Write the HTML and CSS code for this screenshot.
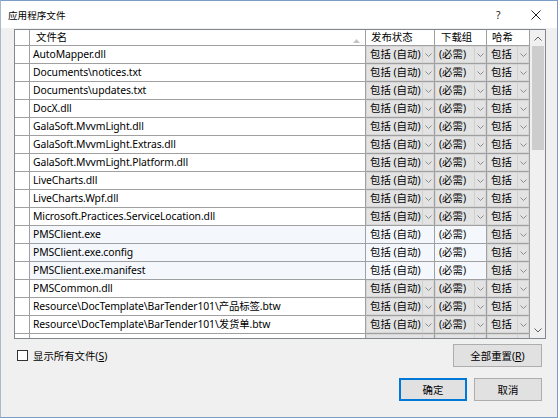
FILE: index.html
```html
<!DOCTYPE html>
<html>
<head>
<meta charset="utf-8">
<link rel="stylesheet" href="styles.css">
</head>
<body>
<div class="win">
  <div class="titlebar">
    <span class="title">应用程序文件</span>
    <span class="tb-help">?</span>
    <span class="tb-close">
      <svg width="10" height="10" viewBox="0 0 10 10"><path d="M0.5 0.5L9.5 9.5M9.5 0.5L0.5 9.5" stroke="#222" stroke-width="1"/></svg>
    </span>
  </div>
  <div class="body">
    <div class="grid">
      <div class="gridmain">
        <div class="row head">
          <div class="c rh"></div>
          <div class="c name hname">文件名<span class="sort">
            <svg width="7" height="4" viewBox="0 0 7 4"><path d="M0 4L3.5 0L7 4Z" fill="#c4c4c4"/></svg></span></div>
          <div class="c hcol">发布状态</div>
          <div class="c hcol">下载组</div>
          <div class="c hcol">哈希</div>
        </div>
        <div id="rows"></div>
      </div>
      <div class="vscroll">
        <div class="sb-btn"><svg width="8" height="5" viewBox="0 0 8 5"><path d="M0.5 4.5L4 1L7.5 4.5" stroke="#606060" fill="none"/></svg></div>
        <div class="sb-track"><div class="sb-thumb"></div></div>
        <div class="sb-btn"><svg width="8" height="5" viewBox="0 0 8 5"><path d="M0.5 0.5L4 4L7.5 0.5" stroke="#606060" fill="none"/></svg></div>
      </div>
    </div>
    <div class="opts">
      <label class="chk"><span class="box"></span>显示所有文件(<u>S</u>)</label>
      <button class="btn reset">全部重置(<u>R</u>)</button>
    </div>
    <div class="actions">
      <button class="btn default">确定</button>
      <button class="btn">取消</button>
    </div>
  </div>
</div>
<script>
var files = [
 ["AutoMapper.dll",1],
 ["Documents\\notices.txt",1],
 ["Documents\\updates.txt",1],
 ["DocX.dll",1],
 ["GalaSoft.MvvmLight.dll",1],
 ["GalaSoft.MvvmLight.Extras.dll",1],
 ["GalaSoft.MvvmLight.Platform.dll",1],
 ["LiveCharts.dll",1],
 ["LiveCharts.Wpf.dll",1],
 ["Microsoft.Practices.ServiceLocation.dll",1],
 ["PMSClient.exe",0],
 ["PMSClient.exe.config",0],
 ["PMSClient.exe.manifest",0],
 ["PMSCommon.dll",1],
 ["Resource\\DocTemplate\\BarTender101\\产品标签.btw",1],
 ["Resource\\DocTemplate\\BarTender101\\发货单.btw",1],
 ["",2]
];
var chev = '<svg width="7" height="4" viewBox="0 0 7 4"><path d="M0.5 0.5L3.5 3.5L6.5 0.5" stroke="#8a8a8a" fill="none"/></svg>';
function combo(t){return '<div class="c cb"><div class="combo"><span class="ct">'+t+'</span><span class="dd">'+chev+'</span></div></div>';}
function plain(t){return '<div class="c pl">'+t+'</div>';}
var html='';
files.forEach(function(f){
  var cells;
  if (f[1]===2) cells = combo('')+combo('')+combo('');
  else if (f[1]===1) cells = combo('包括 (自动)')+combo('(必需)')+combo('包括');
  else cells = plain('包括 (自动)')+plain('(必需)')+combo('包括');
  html += '<div class="row'+(f[1]===0?' sel':'')+'"><div class="c rh"></div><div class="c name">'+f[0]+'</div>'+cells+'</div>';
});
document.getElementById('rows').innerHTML = html;
</script>
</body>
</html>
```

FILE: styles.css
```css
* { box-sizing: border-box; }
html, body { margin: 0; padding: 0; }
body {
  width: 558px; height: 418px; overflow: hidden;
  font-family: "Noto Sans", "Noto Sans CJK SC", sans-serif;
  font-size: 10.4px; color: #000; background: #fff;
}
.win {
  width: 558px; height: 418px;
  border: 1px solid #7a9cc6;
  border-left-color: #a9b8cc;
  background: #f0f0f0;
  display: flex; flex-direction: column;
}
.titlebar {
  height: 27px; background: #fff;
  display: flex; align-items: center;
  padding-left: 7px;
}
.title { flex: 1; font-size: 9.6px; }
.tb-help { width: 8px; font-size: 10.4px; color: #222; margin-right: 27px; }
.tb-close { width: 10px; margin-right: 16px; display: flex; align-items: center; }
.body { flex: 1; padding: 1px 10px 0 13px; display: flex; flex-direction: column; }
.grid {
  width: 532px; height: 310px;
  border: 1px solid #828790;
  background: #fff;
  display: flex;
}
.gridmain { width: 515px; height: 308px; overflow: hidden; }
.row {
  display: grid;
  grid-template-columns: 15px 336px 69px 52px 43px;
  height: 18px;
}
.row.head { height: 16px; }
.c {
  border-right: 1px solid #a0a0a0;
  border-bottom: 1px solid #a0a0a0;
  white-space: nowrap; overflow: hidden;
  line-height: 17px;
}
.row.head .c { line-height: 15px; }
.rh { background: #fff; }
.name { padding-left: 3px; letter-spacing: -0.1px; }
.hname { padding-left: 6px; position: relative; letter-spacing: 0; }
.sort { position: absolute; right: 5px; top: 2px; }
.hcol { padding-left: 5px; }
.row.head .c:nth-child(4) { padding-left: 6px; }
.pl { padding-left: 4px; }
.row.sel .name, .row.sel .pl { background: #f4f7fc; }
.cb { padding: 0; }
.combo {
  height: 17px; display: flex;
  background: #e3e3e3;
  border: 1px solid #d6d6d6;
}
.ct { flex: 1; padding-left: 3px; line-height: 15px; overflow: hidden; }
.dd {
  width: 11px; border-left: 1px solid #d0d0d0;
  display: flex; align-items: center; justify-content: center;
}
.vscroll {
  width: 15px; height: 308px;
  background: #f0f0f0;
  display: flex; flex-direction: column;
  border-left: 1px solid #f0f0f0;
}
.sb-btn { height: 16px; display: flex; align-items: center; justify-content: center; }
.sb-track { flex: 1; padding: 0 1px; }
.sb-thumb { height: 104px; background: #cdcdcd; }
.opts {
  display: flex; justify-content: space-between; align-items: flex-start;
  margin-top: 5px; width: 532px;
}
.chk { display: flex; align-items: center; margin-top: 4px; margin-left: 3px; }
.box {
  width: 11px; height: 11px; border: 1px solid #333; background: #fff;
  margin-right: 5px;
}
.btn {
  font-family: inherit; font-size: 10.4px;
  height: 23px; width: 68px;
  background: #e1e1e1; border: 1px solid #adadad;
  padding: 0; color: #000;
}
.btn.reset { width: 89px; margin-right: 4px; }
.actions {
  display: flex; justify-content: flex-end; gap: 7px;
  margin-top: 11px; width: 528px;
}
.btn.default { border: 1px solid #0078d7; box-shadow: inset 0 0 0 1px #0078d7; }
```
